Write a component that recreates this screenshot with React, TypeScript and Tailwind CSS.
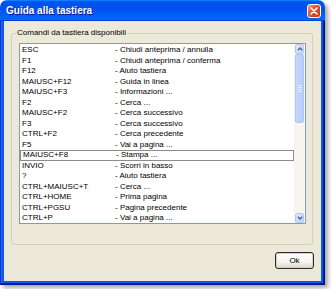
const rows: [string, string][] = [
  ["ESC", "- Chiudi anteprima / annulla"],
  ["F1", "- Chiudi anteprima / conferma"],
  ["F12", "- Aiuto tastiera"],
  ["MAIUSC+F12", "- Guida in linea"],
  ["MAIUSC+F3", "- Informazioni ..."],
  ["F2", "- Cerca ..."],
  ["MAIUSC+F2", "- Cerca successivo"],
  ["F3", "- Cerca successivo"],
  ["CTRL+F2", "- Cerca precedente"],
  ["F5", "- Vai a pagina ..."],
  ["MAIUSC+F8", "- Stampa ..."],
  ["INVIO", "- Scorri in basso"],
  ["?", "- Aiuto tastiera"],
  ["CTRL+MAIUSC+T", "- Cerca ..."],
  ["CTRL+HOME", "- Prima pagina"],
  ["CTRL+PGSU", "- Pagina precedente"],
  ["CTRL+P", "- Vai a pagina ..."],
];

const SELECTED = 10;

function CloseButton() {
  return (
    <div className="w-[14px] h-[14px] rounded-[3px] border border-white bg-[linear-gradient(135deg,#f0a08a,#e1542f_40%,#c8381a)] flex items-center justify-center">
      <svg width="8" height="8" viewBox="0 0 8 8">
        <path d="M1 1 L7 7 M7 1 L1 7" stroke="white" strokeWidth="1.6" strokeLinecap="round" />
      </svg>
    </div>
  );
}

function ScrollArrow({ up }: { up?: boolean }) {
  return (
    <div className="h-[10px] mx-[1px] rounded-[2px] border border-[#b5c9f5] bg-[linear-gradient(135deg,#e2ebfd,#bed0fa)] flex items-center justify-center">
      <svg width="6" height="4" viewBox="0 0 6 4">
        <path
          d={up ? "M0.8 3.2 L3 1 L5.2 3.2" : "M0.8 0.8 L3 3 L5.2 0.8"}
          fill="none"
          stroke="#4d6185"
          strokeWidth="1.3"
        />
      </svg>
    </div>
  );
}

function Scrollbar() {
  return (
    <div className="w-[11px] flex flex-col bg-[#f6f5f0]">
      <ScrollArrow up />
      <div className="h-[69px] mx-[1px] rounded-[2px] border border-[#b0c6f6] bg-[linear-gradient(90deg,#c6d6fc,#b8cdfa)] flex items-center justify-center">
        <div className="flex flex-col gap-[1px]">
          <div className="w-[4px] h-[1px] bg-[#e8effe]" />
          <div className="w-[4px] h-[1px] bg-[#e8effe]" />
          <div className="w-[4px] h-[1px] bg-[#e8effe]" />
          <div className="w-[4px] h-[1px] bg-[#e8effe]" />
        </div>
      </div>
      <div className="flex-1" />
      <ScrollArrow />
    </div>
  );
}

export default function App() {
  return (
    <div className="w-[332px] h-[289px] bg-white font-['Liberation_Sans',Arial,sans-serif]">
      <div className="w-[325px] h-[285px] flex flex-col rounded-t-[7px] overflow-hidden shadow-[3px_3px_4px_rgba(0,0,0,0.35)]">
        <div className="h-[21px] flex items-center justify-between pl-[6px] pr-[4px] bg-[linear-gradient(180deg,#0997ff,#0053ee_8%,#0050ee_40%,#0066ff_88%,#0066ff_93%,#005bff_95%,#003dd7_96%,#003dd7)]">
          <span className="text-white font-bold text-[10px] [text-shadow:1px_1px_#0f1089]">
            Guida alla tastiera
          </span>
          <CloseButton />
        </div>
        <div className="flex-1 flex px-[4px] pb-[4px] bg-[#0b5ae6] shadow-[inset_-1px_-1px_#00138c,inset_1px_0_#0831d9,inset_-2px_-2px_#001ea0,inset_2px_0_#166aee]">
          <div className="flex-1 flex flex-col bg-[#ece9d8] pl-[7px] pr-[8px] text-[8px] text-black">
            <fieldset className="mt-[7px] border border-[#d0d0bf] rounded-[3px] pl-[7px] pr-[6px] pt-[5px] pb-[20px]">
              <legend className="-ml-[3px] px-[1px] leading-[10px]">Comandi da tastiera disponibili</legend>
              <div className="h-[181px] flex border border-[#7f9db9] bg-white overflow-hidden">
                <div className="flex-1 flex flex-col pt-[1px]">
                  {rows.map(([k, d], i) => (
                    <div
                      key={i}
                      className={`h-[10.5px] shrink-0 flex items-center pl-[2px] leading-[10px] ${
                        i === SELECTED ? "border border-[#8c8c8c] pl-[1px]" : ""
                      }`}
                    >
                      <span className="w-[93px] shrink-0">{k}</span>
                      <span>{d}</span>
                    </div>
                  ))}
                </div>
                <Scrollbar />
              </div>
            </fieldset>
            <div className="flex justify-end mt-[7px] mr-[-1px]">
              <button className="w-[39px] h-[17px] rounded-[3px] border border-[#2a2a2a] bg-[linear-gradient(180deg,#ffffff,#f4f3ee_60%,#dcd8c8)] shadow-[inset_0_0_0_1px_#d6d0bd] text-[8px] leading-none">
                Ok
              </button>
            </div>
          </div>
        </div>
      </div>
    </div>
  );
}
